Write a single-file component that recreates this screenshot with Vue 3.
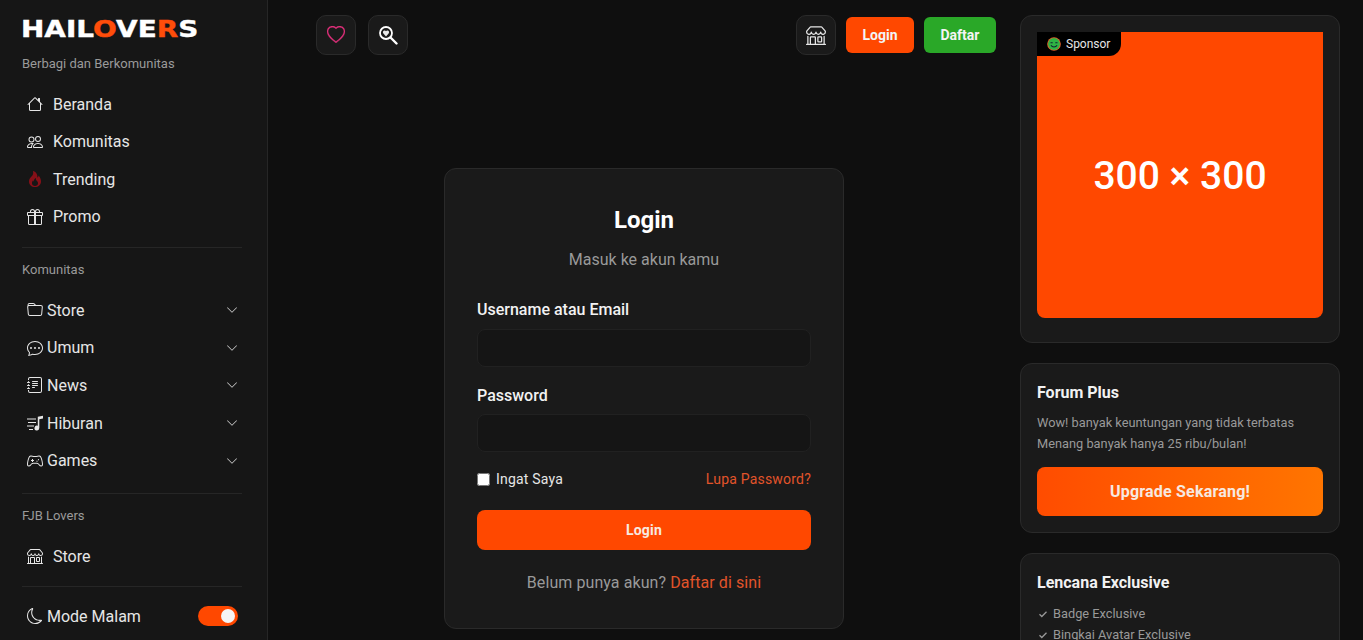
<script setup>
const icons = {
  house: 'M8.707 1.5a1 1 0 0 0-1.414 0L.646 8.146a.5.5 0 0 0 .708.708L2 8.207V13.5A1.5 1.5 0 0 0 3.5 15h9a1.5 1.5 0 0 0 1.5-1.5V8.207l.646.647a.5.5 0 0 0 .708-.708L13 5.793V2.5a.5.5 0 0 0-.5-.5h-1a.5.5 0 0 0-.5.5v1.293zM13 7.207V13.5a.5.5 0 0 1-.5.5h-9a.5.5 0 0 1-.5-.5V7.207l5-5z',
  people: 'M15 14s1 0 1-1-1-4-5-4-5 3-5 4 1 1 1 1zm-7.978-1L7 12.996c.001-.264.167-1.03.76-1.72C8.312 10.629 9.282 10 11 10c1.717 0 2.687.63 3.24 1.276.593.69.758 1.457.76 1.72l-.008.002-.014.002H7.022zM11 7a2 2 0 1 0 0-4 2 2 0 0 0 0 4m3-2a3 3 0 1 1-6 0 3 3 0 0 1 6 0M6.936 9.28a6 6 0 0 0-1.23-.247A7 7 0 0 0 5 9c-4 0-5 3-5 4q0 1 1 1h4.216A2.24 2.24 0 0 1 5 13c0-1.01.377-2.042 1.09-2.904.243-.294.526-.569.846-.816M4.92 10A5.5 5.5 0 0 0 4 13H1c0-.26.164-1.03.76-1.724.545-.636 1.492-1.256 3.16-1.275ZM1.5 5.5a3 3 0 1 1 6 0 3 3 0 0 1-6 0m3-2a2 2 0 1 0 0 4 2 2 0 0 0 0-4',
  fire: 'M8 16c3.314 0 6-2 6-5.500 0-1.500-.5-4-2.500-6 .25 1.500-1.250 2-1.250 2C11 4 9 .5 6 0c.357 2 .5 4-2 6-1.250 1-2 2.729-2 4.500C2 14 4.686 16 8 16m0-1c-1.657 0-3-1-3-2.750 0-.75.25-2 1.250-3C6.125 10 7 10.500 7 10.500c-.375-1.250.5-3.250 2-3.500-.179 1-.25 2 1 3 .625.5 1 1.364 1 2.250C11 14 9.657 15 8 15',
  gift: 'M3 2.5a2.5 2.5 0 0 1 5 0 2.5 2.5 0 0 1 5 0v.006c0 .07 0 .27-.038.494H15a1 1 0 0 1 1 1v2a1 1 0 0 1-1 1v7.5a1.5 1.5 0 0 1-1.5 1.5h-11A1.5 1.5 0 0 1 1 14.5V7a1 1 0 0 1-1-1V4a1 1 0 0 1 1-1h2.038A3 3 0 0 1 3 2.506zm1.068.5H7v-.5a1.5 1.5 0 1 0-3 0c0 .085.002.274.045.43zM9 3h2.932l.023-.07c.043-.156.045-.345.045-.43a1.5 1.5 0 0 0-3 0zM1 4v2h6V4zm8 0v2h6V4zm5 3H9v8h4.5a.5.5 0 0 0 .5-.5zm-7 8V7H2v7.5a.5.5 0 0 0 .5.5z',
  folder: 'M.54 3.87.5 3a2 2 0 0 1 2-2h3.672a2 2 0 0 1 1.414.586l.828.828A2 2 0 0 0 9.828 3h3.982a2 2 0 0 1 1.992 2.181l-.637 7A2 2 0 0 1 13.174 14H2.826a2 2 0 0 1-1.991-1.819l-.637-7a2 2 0 0 1 .342-1.31zM2.19 4a1 1 0 0 0-.996 1.09l.637 7a1 1 0 0 0 .995.91h10.348a1 1 0 0 0 .995-.91l.637-7A1 1 0 0 0 13.81 4zm4.69-1.707A1 1 0 0 0 6.172 2H2.5a1 1 0 0 0-1 .981l.006.139q.323-.119.684-.12h5.396z',
  chat: 'M5 8a1 1 0 1 1-2 0 1 1 0 0 1 2 0m4 0a1 1 0 1 1-2 0 1 1 0 0 1 2 0m3 1a1 1 0 1 0 0-2 1 1 0 0 0 0 2M2.165 15.803l.02-.004c1.83-.363 2.948-.842 3.468-1.105A9 9 0 0 0 8 15c4.418 0 8-3.134 8-7s-3.582-7-8-7-8 3.134-8 7c0 1.76.743 3.37 1.97 4.6a10.4 10.4 0 0 1-.524 2.318l-.003.011a11 11 0 0 1-.244.637c-.079.186.074.394.273.362a22 22 0 0 0 .693-.125m.8-3.108a1 1 0 0 0-.287-.801C1.618 10.83 1 9.468 1 8c0-3.192 3.004-6 7-6s7 2.808 7 6-3.004 6-7 6a8 8 0 0 1-2.088-.272 1 1 0 0 0-.711.074c-.387.196-1.24.57-2.634.893a11 11 0 0 0 .398-2',
  journal: 'M5 10.5a.5.5 0 0 1 .5-.5h2a.5.5 0 0 1 0 1h-2a.5.5 0 0 1-.5-.5m0-2a.5.5 0 0 1 .5-.5h5a.5.5 0 0 1 0 1h-5a.5.5 0 0 1-.5-.5m0-2a.5.5 0 0 1 .5-.5h5a.5.5 0 0 1 0 1h-5a.5.5 0 0 1-.5-.5m0-2a.5.5 0 0 1 .5-.5h5a.5.5 0 0 1 0 1h-5a.5.5 0 0 1-.5-.5M3 0h10a2 2 0 0 1 2 2v12a2 2 0 0 1-2 2H3a2 2 0 0 1-2-2v-1h1v1a1 1 0 0 0 1 1h10a1 1 0 0 0 1-1V2a1 1 0 0 0-1-1H3a1 1 0 0 0-1 1v1H1V2a2 2 0 0 1 2-2M1 5v-.5a.5.5 0 0 1 1 0V5h.5a.5.5 0 0 1 0 1h-2a.5.5 0 0 1 0-1zm0 3v-.5a.5.5 0 0 1 1 0V8h.5a.5.5 0 0 1 0 1h-2a.5.5 0 0 1 0-1zm0 3v-.5a.5.5 0 0 1 1 0v.5h.5a.5.5 0 0 1 0 1h-2a.5.5 0 0 1 0-1z',
  music: 'M0 3.500h9v1H0zM1 7h8v1H1zM0 10.500h7v1H0zM2 14h4v1H2zM10.800 1.800 16 .8v2.700l-3.700.7V13a2.400 2.400 0 1 1-1.500-2.200z',
  pad: 'M11.500 6.030a.6.6 0 1 1 0 1.200.6.6 0 0 1 0-1.200m-1.500 1.500a.6.6 0 1 1 0 1.200.6.6 0 0 1 0-1.200M5 6h1v1h1v1H6v1H5V8H4V7h1zM3.600 2.600c-1 .2-1.700.8-2.100 1.800C.7 6.300.1 8.900 0 10.900c-.1 1.500.5 2.500 1.700 2.700.9.100 1.600-.4 2.200-1.100.7-.9 1.200-1.700 2.300-1.700h3.600c1.100 0 1.600.8 2.300 1.700.6.700 1.300 1.200 2.200 1.100 1.200-.2 1.800-1.200 1.700-2.700-.1-2-.7-4.600-1.500-6.500-.4-1-1.100-1.600-2.100-1.800-1.200-.2-2.100.5-3 .5H6.600c-.9 0-1.800-.7-3-.5m.2 1c.9-.1 1.800.5 2.800.5h2.800c1 0 1.900-.6 2.800-.5.7.1 1.100.5 1.400 1.200.7 1.800 1.300 4.300 1.400 6.100.1 1-.2 1.600-.8 1.700-.5.1-.9-.3-1.400-.8-.7-.9-1.400-2.100-3.100-2.100H6.300c-1.700 0-2.400 1.200-3.100 2.100-.5.500-.9.900-1.400.8-.6-.1-.9-.7-.8-1.700.1-1.800.7-4.300 1.400-6.100.3-.7.700-1.100 1.400-1.200',
  moon: 'M6 .278a.77.77 0 0 1 .08.858 7.2 7.2 0 0 0-.878 3.46c0 4.021 3.278 7.277 7.318 7.277q.792-.001 1.533-.16a.79.79 0 0 1 .81.316.73.73 0 0 1-.031.893A8.35 8.35 0 0 1 8.344 16C3.734 16 0 12.286 0 7.71 0 4.266 2.114 1.312 5.124.06A.75.75 0 0 1 6 .278M4.858 1.311A7.27 7.27 0 0 0 1.025 7.71c0 4.02 3.279 7.276 7.319 7.276a7.32 7.32 0 0 0 5.205-2.162q-.506.063-1.029.063c-4.61 0-8.343-3.714-8.343-8.29 0-1.167.242-2.278.681-3.286',
  shop: 'M2.97 1.35A1 1 0 0 1 3.73 1h8.54a1 1 0 0 1 .76.35l2.609 3.044A1.5 1.5 0 0 1 16 5.37v.255a2.375 2.375 0 0 1-4.25 1.458A2.37 2.37 0 0 1 9.875 8 2.37 2.37 0 0 1 8 7.083 2.37 2.37 0 0 1 6.125 8a2.37 2.37 0 0 1-1.875-.917A2.375 2.375 0 0 1 0 5.625V5.37a1.5 1.5 0 0 1 .361-.976zm1.78 4.275a1.375 1.375 0 0 0 2.75 0 .5.5 0 0 1 1 0 1.375 1.375 0 0 0 2.75 0 .5.5 0 0 1 1 0 1.375 1.375 0 1 0 2.75 0V5.37a.5.5 0 0 0-.12-.325L12.27 2H3.73L1.12 5.045A.5.5 0 0 0 1 5.37v.255a1.375 1.375 0 0 0 2.75 0 .5.5 0 0 1 1 0M1.5 8.5A.5.5 0 0 1 2 9v6h1v-5a1 1 0 0 1 1-1h3a1 1 0 0 1 1 1v5h6V9a.5.5 0 0 1 1 0v6h.5a.5.5 0 0 1 0 1H.5a.5.5 0 0 1 0-1H1V9a.5.5 0 0 1 .5-.5M4 15h3v-5H4zm5-5a1 1 0 0 1 1-1h2a1 1 0 0 1 1 1v3a1 1 0 0 1-1 1h-2a1 1 0 0 1-1-1zm3 0h-2v3h2z',
  heart: 'm8 2.748-.717-.737C5.6.281 2.514.878 1.4 3.053c-.523 1.023-.641 2.5.314 4.385.92 1.815 2.834 3.989 6.286 6.357 3.452-2.368 5.365-4.542 6.286-6.357.955-1.886.838-3.362.314-4.385C13.486.878 10.4.28 8.717 2.01zM8 15C-7.333 4.868 3.279-3.04 7.824 1.143q.09.083.176.171a3 3 0 0 1 .176-.17C12.72-3.042 23.333 4.867 8 15',
  chevron: 'M1.646 4.646a.5.5 0 0 1 .708 0L8 10.293l5.646-5.647a.5.5 0 0 1 .708.708l-6 6a.5.5 0 0 1-.708 0l-6-6a.5.5 0 0 1 0-.708'
}
const mainNav = [
  { label: 'Beranda', icon: 'house' },
  { label: 'Komunitas', icon: 'people' },
  { label: 'Trending', icon: 'fire', hot: true },
  { label: 'Promo', icon: 'gift' }
]
const community = [
  { label: 'Store', icon: 'folder' },
  { label: 'Umum', icon: 'chat' },
  { label: 'News', icon: 'journal' },
  { label: 'Hiburan', icon: 'music' },
  { label: 'Games', icon: 'pad' }
]
const perks = ['Badge Exclusive', 'Bingkai Avatar Exclusive']
</script>

<template>
  <div class="page">
    <aside class="sidebar">
      <div class="logo"><span class="logo-text">HAIL<b>O</b>VE<b>R</b>S</span></div>
      <p class="tagline">Berbagi dan Berkomunitas</p>
      <nav class="nav">
        <a v-for="n in mainNav" :key="n.label" class="nav-item">
          <svg class="ico" :class="{ hot: n.hot }" viewBox="0 0 16 16"><path :d="icons[n.icon]" /></svg>
          <span>{{ n.label }}</span>
        </a>
      </nav>
      <hr class="rule first" />
      <p class="section">Komunitas</p>
      <nav class="tree">
        <a v-for="c in community" :key="c.label" class="tree-item">
          <svg class="ico" viewBox="0 0 16 16"><path :d="icons[c.icon]" /></svg>
          <span class="grow">{{ c.label }}</span>
          <svg class="chev" viewBox="0 0 16 16"><path :d="icons.chevron" /></svg>
        </a>
      </nav>
      <hr class="rule second" />
      <p class="section">FJB Lovers</p>
      <a class="nav-item store">
        <svg class="ico" viewBox="0 0 16 16"><path :d="icons.shop" /></svg>
        <span>Store</span>
      </a>
      <hr class="rule third" />
      <div class="mode">
        <svg class="ico" viewBox="0 0 16 16"><path :d="icons.moon" /></svg>
        <span class="grow">Mode Malam</span>
        <span class="toggle"><i></i></span>
      </div>
    </aside>

    <main class="center">
      <header class="topbar">
        <button class="icon-btn">
          <svg class="heart" viewBox="0 0 16 16"><path :d="icons.heart" /></svg>
        </button>
        <button class="icon-btn">
          <svg class="lens" viewBox="0 0 20 20">
            <circle cx="8" cy="8" r="6" fill="none" stroke="#fff" stroke-width="1.800" />
            <path d="m12.500 12.500 6 6" stroke="#fff" stroke-width="2.400" stroke-linecap="round" />
            <path d="M8 11.500 5.200 8.300C4.300 6.900 5.400 5.200 6.800 5.500c.5.100.9.400 1.200.8.300-.4.700-.7 1.200-.8 1.400-.3 2.500 1.400 1.600 2.800z" fill="#e8e8e8" />
          </svg>
        </button>
        <span class="spacer"></span>
        <button class="icon-btn">
          <svg class="shop" viewBox="0 0 16 16"><path :d="icons.shop" /></svg>
        </button>
        <button class="btn login">Login</button>
        <button class="btn daftar">Daftar</button>
      </header>

      <section class="card login-card">
        <h1>Login</h1>
        <p class="sub">Masuk ke akun kamu</p>
        <label class="field">
          <span>Username atau Email</span>
          <input type="text" />
        </label>
        <label class="field">
          <span>Password</span>
          <input type="password" />
        </label>
        <div class="row">
          <label class="remember"><input type="checkbox" /> <span>Ingat Saya</span></label>
          <a class="link">Lupa Password?</a>
        </div>
        <button class="submit">Login</button>
        <p class="foot">Belum punya akun? <a class="link">Daftar di sini</a></p>
      </section>
    </main>

    <aside class="right">
      <section class="card ad">
        <div class="banner">
          <span class="tag">
            <svg viewBox="0 0 16 16" class="smile">
              <circle cx="8" cy="8" r="7.800" fill="#e8622a" />
              <circle cx="8" cy="8" r="6.800" fill="#2fb344" />
              <path d="M4 6.500h2.500M9.500 6.500H12" stroke="#123" stroke-width="1.200" />
              <path d="M4.500 9.500c1.500 2.500 5.500 2.500 7 0" fill="none" stroke="#123" stroke-width="1.200" />
            </svg>
            Sponsor
          </span>
          300 × 300
        </div>
      </section>
      <section class="card plus">
        <h3>Forum Plus</h3>
        <p>Wow! banyak keuntungan yang tidak terbatas<br />Menang banyak hanya 25 ribu/bulan!</p>
        <button class="upgrade">Upgrade Sekarang!</button>
      </section>
      <section class="card badge">
        <h3>Lencana Exclusive</h3>
        <ul>
          <li v-for="p in perks" :key="p">
            <svg viewBox="0 0 10 10"><path d="m1.500 5.300 2.300 2.200 4.700-4.800" fill="none" stroke="#999" stroke-width="1.300" /></svg>
            {{ p }}
          </li>
        </ul>
      </section>
    </aside>
  </div>
</template>

<style>
html, body { background: #0f0f0f; overflow: hidden; }
</style>

<style scoped>
.page {
  display: flex;
  height: 640px;
  overflow: hidden;
  background: #0f0f0f;
  color: #fff;
  font-family: Roboto, "Liberation Sans", sans-serif;
  font-size: 16px;
}
p, h1, h3, ul { margin: 0; padding: 0; }
a { color: inherit; text-decoration: none; }
button { font-family: inherit; border: 0; cursor: pointer; }

/* sidebar */
.sidebar {
  flex: 0 0 268px;
  box-sizing: border-box;
  padding: 16px 25px 0 22px;
  background: #161616;
  border-right: 1px solid #262626;
  overflow: hidden;
}
.logo { height: 27px; white-space: nowrap; margin-left: -1px; }
.logo-text {
  display: inline-block;
  font-family: "DejaVu Sans", sans-serif;
  font-weight: 700;
  font-size: 23px;
  line-height: 27px;
  transform: scaleX(1.213);
  transform-origin: left center;
  -webkit-text-stroke: .4px currentColor;
}
.logo-text b { color: #ff4d0a; font-weight: 700; }
.tagline { margin-top: 13px; font-size: 13px; line-height: 16px; color: #9a9a9a; }
.nav { margin-top: 13.500px; }
.nav-item {
  display: flex;
  align-items: center;
  gap: 10px;
  height: 37.500px;
  padding-left: 5px;
  color: #e6e6e6;
}
.ico { width: 16px; height: 16px; flex: none; fill: #e6e6e6; }
.ico.hot { fill: #861018; }
.rule { border: 0; border-top: 1px solid #262626; margin: 0; }
.rule.first { margin-top: 11px; }
.rule.second { margin-top: 14px; }
.rule.third { margin-top: 11px; }
.section { margin-top: 14px; font-size: 13px; line-height: 16px; color: #9a9a9a; }
.tree { margin-top: 14px; }
.tree-item {
  display: flex;
  align-items: center;
  gap: 4px;
  height: 37.600px;
  padding-left: 5px;
  color: #e6e6e6;
}
.grow { flex: 1; }
.chev { width: 12px; height: 12px; fill: #cfcfcf; margin-right: 4px; }
.store { margin-top: 13px; }
.mode {
  display: flex;
  align-items: center;
  gap: 4px;
  height: 20px;
  margin-top: 19.500px;
  padding-left: 5px;
  color: #e6e6e6;
}
.toggle {
  width: 40px;
  height: 20px;
  margin-right: 4px;
  border-radius: 10px;
  background: #ff4800;
  display: flex;
  align-items: center;
  justify-content: flex-end;
  padding-right: 3px;
  box-sizing: border-box;
}
.toggle i { width: 14px; height: 14px; border-radius: 50%; background: #f5f5f5; }

/* centre */
.center { flex: 0 0 704px; margin: 0 24px; min-width: 0; }
.topbar { display: flex; align-items: center; height: 40px; margin-top: 15px; padding-left: 24px; gap: 12px; }
.spacer { flex: 1; }
.icon-btn {
  width: 40px;
  height: 40px;
  padding: 0;
  border-radius: 10px;
  background: #1a1a1a;
  border: 1px solid #2a2a2a;
  display: flex;
  align-items: center;
  justify-content: center;
}
.heart { width: 18px; height: 18px; fill: #e0307c; stroke: #e0307c; stroke-width: .3px; }
.lens { width: 20px; height: 20px; }
.shop { width: 20px; height: 20px; fill: #e6e6e6; }
.btn {
  height: 36px;
  border-radius: 6px;
  color: #f4f4f4;
  font-size: 14px;
  font-weight: 700;
  margin-left: -2px;
}
.btn.login { width: 68px; background: #ff4800; }
.btn.daftar { width: 72px; background: #2aa828; }

.card {
  box-sizing: border-box;
  background: #1a1a1a;
  border: 1px solid #2a2a2a;
  border-radius: 12px;
}
.login-card {
  width: 400px;
  height: 461px;
  margin: 113px auto 0;
  padding: 32px;
}
.login-card h1 { font-size: 24px; line-height: 36px; font-weight: 700; text-align: center; margin-top: 1px; }
.sub { margin-top: 10px; text-align: center; color: #999; line-height: 24px; }
.field { display: block; font-weight: 500; color: #f2f2f2; }
.field span { display: block; line-height: 24px; }
.field:nth-of-type(1) { margin-top: 26px; }
.field:nth-of-type(2) { margin-top: 17px; }
.field input {
  display: block;
  box-sizing: border-box;
  width: 100%;
  height: 38px;
  margin-top: 6.500px;
  background: #151515;
  border: 1px solid #212121;
  border-radius: 8px;
  outline: 0;
}
.row {
  display: flex;
  justify-content: space-between;
  align-items: center;
  margin-top: 17px;
  font-size: 14px;
  letter-spacing: .2px;
  line-height: 20px;
}
.remember { display: flex; align-items: center; gap: 6px; color: #e6e6e6; }
.remember input { width: 13px; height: 13px; margin: 0; }
.link { color: #e2542a; }
.submit {
  display: block;
  width: 100%;
  height: 40px;
  margin-top: 21px;
  border-radius: 8px;
  background: #ff4800;
  color: #f7e9e0;
  font-size: 14px;
  font-weight: 700;
  letter-spacing: .2px;
}
.foot { margin-top: 21px; text-align: center; color: #999; line-height: 24px; letter-spacing: .08px; }

/* right */
.right { flex: 0 0 320px; padding-top: 15px; display: flex; flex-direction: column; gap: 20px; }
.right .card { padding: 16px; flex: none; }
.right .ad { padding-bottom: 24px; }
.banner {
  position: relative;
  height: 286px;
  border-radius: 0 0 8px 8px;
  background: #ff4800;
  display: flex;
  align-items: center;
  justify-content: center;
  font-size: 39px;
  font-weight: 500;
  padding-top: 2px;
  box-sizing: border-box;
}
.tag {
  position: absolute;
  left: 0;
  top: 0;
  width: 84px;
  height: 24px;
  padding-left: 10px;
  box-sizing: border-box;
  display: flex;
  align-items: center;
  gap: 5px;
  background: #000;
  border-radius: 0 0 12px 0;
  font-size: 12px;
  font-weight: 400;
  color: #e6e6e6;
}
.smile { width: 14px; height: 14px; }
.plus { height: 170px; }
.right h3 { font-size: 16px; line-height: 26px; font-weight: 700; color: #f2f2f2; }
.plus p { margin-top: 6px; font-size: 12.800px; line-height: 21px; color: #999; }
.upgrade {
  display: block;
  width: 100%;
  height: 49px;
  margin-top: 13px;
  border-radius: 8px;
  background: linear-gradient(90deg, #ff4c00, #ff7500);
  color: #f7e9e0;
  font-size: 16px;
  font-weight: 700;
  letter-spacing: .2px;
}
.badge ul { list-style: none; margin-top: 7px; }
.badge li {
  display: flex;
  align-items: center;
  gap: 5px;
  height: 21px;
  font-size: 12.800px;
  color: #999;
}
.badge li svg { width: 10px; height: 10px; margin-left: 1px; }
</style>
